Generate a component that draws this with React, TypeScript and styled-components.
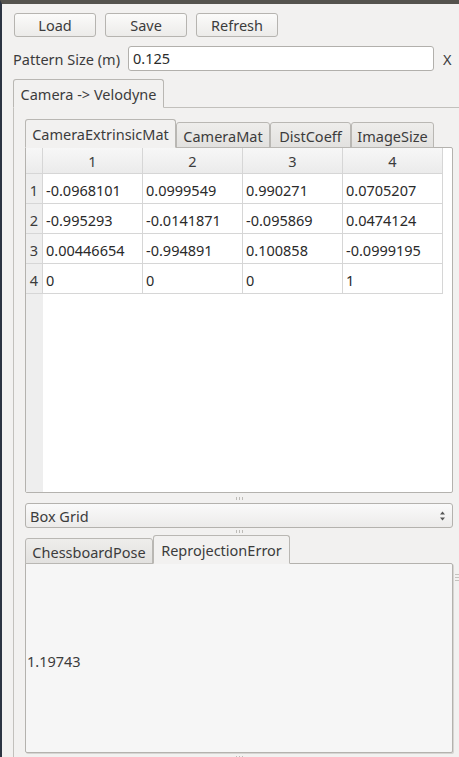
import styled, { createGlobalStyle } from "styled-components";

const Global = createGlobalStyle`
  html, body {
    margin: 0;
    padding: 0;
    background: #f2f1f0;
    overflow: hidden;
  }
  * { box-sizing: border-box; }
`;

const Window = styled.div`
  width: 459px;
  height: 757px;
  overflow: hidden;
  background: #f2f1f0;
  border-left: 2px solid #2c3442;
  border-top: 4px solid #55534e;
  font-family: "Noto Sans", "DejaVu Sans", sans-serif;
  font-size: 14.5px;
  color: #3c3c3c;
  display: flex;
  flex-direction: column;
  position: relative;
`;

const Toolbar = styled.div`
  display: flex;
  gap: 9px;
  padding: 9px 0 0 12px;
`;

const Button = styled.button`
  width: 82px;
  height: 24px;
  border: 1px solid #b6b4b0;
  border-radius: 3px;
  background: linear-gradient(#fbfbfa, #ecebe9);
  font: inherit;
  color: #3c3c3c;
  padding: 0;
  line-height: 20px;
`;

const PatternRow = styled.div`
  display: flex;
  align-items: center;
  padding: 9px 0 8px 11px;
`;

const Label = styled.span`
  width: 115px;
  white-space: nowrap;
`;

const TextInput = styled.div`
  width: 306px;
  height: 25px;
  border: 1px solid #b2b0ac;
  border-radius: 3px;
  background: #fff;
  padding: 0 0 0 4px;
  line-height: 23px;
  color: #2a2a2a;
`;

const Clear = styled.span`
  margin-left: 9px;
`;

const TabBar = styled.div<{ $indent: number }>`
  display: flex;
  align-items: flex-end;
  padding-left: ${(p) => p.$indent}px;
  position: relative;
  z-index: 1;
`;

const Tab = styled.div<{ $active?: boolean; $w: number }>`
  width: ${(p) => p.$w}px;
  height: ${(p) => (p.$active ? 29 : 26)}px;
  margin-bottom: -1px;
  border: 1px solid #b9b7b3;
  border-bottom-color: ${(p) => (p.$active ? "transparent" : "#b9b7b3")};
  border-radius: 3px 3px 0 0;
  background: ${(p) =>
    p.$active ? "#f2f1f0" : "linear-gradient(#eeedeb, #e2e1df)"};
  display: flex;
  align-items: center;
  justify-content: center;
  padding-top: ${(p) => (p.$active ? 0 : 2)}px;
  white-space: nowrap;
  color: #3c3c3c;
`;

const OuterPane = styled.div`
  margin-left: 11px;
  width: 470px;
  flex: 1;
  border: 1px solid #c2c0bc;
  border-radius: 0 3px 0 0;
  padding: 11px 0 0 11px;
  display: flex;
  flex-direction: column;
`;

const Column = styled.div`
  width: 428px;
  display: flex;
  flex-direction: column;
`;

const TableFrame = styled.div`
  height: 346px;
  border: 1px solid #b4b2ae;
  border-radius: 0 2px 2px 2px;
  background: #fff;
  display: flex;
  position: relative;
  z-index: 0;
`;

const RowHeaderStrip = styled.div`
  width: 17px;
  background: #eeeeee;
  display: flex;
  flex-direction: column;
`;

const Grid = styled.div`
  display: grid;
  grid-template-columns: repeat(4, 100px);
  grid-template-rows: 26px repeat(4, 30px);
  align-self: flex-start;
`;

const HeaderCorner = styled.div`
  height: 26px;
  background: linear-gradient(#f7f7f7, #ebebeb);
  border-right: 1px solid #d6d6d6;
  border-bottom: 1px solid #d6d6d6;
`;

const RowHead = styled.div`
  height: 30px;
  border-bottom: 1px solid #d6d6d6;
  border-right: 1px solid #d6d6d6;
  display: flex;
  align-items: center;
  justify-content: center;
  padding-top: 2px;
  color: #3c3c3c;
`;

const ColHead = styled.div`
  background: linear-gradient(#f7f7f7, #ebebeb);
  border-right: 1px solid #d6d6d6;
  border-bottom: 1px solid #d6d6d6;
  display: flex;
  align-items: center;
  justify-content: center;
  color: #3c3c3c;
`;

const Cell = styled.div`
  border-right: 1px solid #d6d6d6;
  border-bottom: 1px solid #d6d6d6;
  display: flex;
  align-items: center;
  padding: 2px 0 0 3px;
  color: #2a2a2a;
  white-space: nowrap;
`;

const Splitter = styled.div<{ $h: number }>`
  height: ${(p) => p.$h}px;
  display: flex;
  align-items: center;
  justify-content: center;
  gap: 2px;
`;

const Tick = styled.span`
  width: 1px;
  height: 3px;
  background: #bdbbb7;
`;

const Combo = styled.div`
  height: 25px;
  border: 1px solid #b4b2ae;
  border-radius: 3px;
  background: linear-gradient(#fafafa, #ecebea);
  display: flex;
  align-items: center;
  justify-content: space-between;
  padding: 0 6px 0 4px;
  color: #3c3c3c;
`;

const LowerPane = styled.div`
  height: 190px;
  border: 1px solid #b4b2ae;
  border-radius: 0 2px 2px 2px;
  background: #f6f6f6;
  box-shadow: 1px 1px 0 #d6d5d2;
  display: flex;
  align-items: center;
  padding: 6px 0 0 1px;
`;

const SideGrip = styled.div`
  position: absolute;
  right: 0;
  top: 570px;
  width: 4px;
  display: flex;
  flex-direction: column;
  gap: 2px;
`;

const GripLine = styled.span`
  height: 1px;
  background: #c4c2be;
`;

const matrix = [
  ["-0.0968101", "0.0999549", "0.990271", "0.0705207"],
  ["-0.995293", "-0.0141871", "-0.095869", "0.0474124"],
  ["0.00446654", "-0.994891", "0.100858", "-0.0999195"],
  ["0", "0", "0", "1"],
];

function SplitHandle({ h }: { h: number }) {
  return (
    <Splitter $h={h}>
      <Tick />
      <Tick />
      <Tick />
    </Splitter>
  );
}

function Arrows() {
  return (
    <svg width="7" height="12" viewBox="0 0 7 12">
      <path d="M3.5 1.5 L6 4.5 H1 Z" fill="#555" />
      <path d="M3.5 10.5 L6 7.5 H1 Z" fill="#555" />
    </svg>
  );
}

export default function App() {
  return (
    <>
      <Global />
      <Window>
        <Toolbar>
          <Button>Load</Button>
          <Button>Save</Button>
          <Button>Refresh</Button>
        </Toolbar>
        <PatternRow>
          <Label>Pattern Size (m)</Label>
          <TextInput>0.125</TextInput>
          <Clear>X</Clear>
        </PatternRow>

        <TabBar $indent={11}>
          <Tab $active $w={151}>
            Camera -&gt; Velodyne
          </Tab>
        </TabBar>
        <OuterPane>
          <Column>
            <TabBar $indent={0}>
              <Tab $active $w={151}>
                CameraExtrinsicMat
              </Tab>
              <Tab $w={94}>CameraMat</Tab>
              <Tab $w={81}>DistCoeff</Tab>
              <Tab $w={83}>ImageSize</Tab>
            </TabBar>
            <TableFrame>
              <RowHeaderStrip>
                <HeaderCorner />
                {matrix.map((_, i) => (
                  <RowHead key={i}>{i + 1}</RowHead>
                ))}
              </RowHeaderStrip>
              <Grid>
                {[1, 2, 3, 4].map((c) => (
                  <ColHead key={c}>{c}</ColHead>
                ))}
                {matrix.map((row, i) =>
                  row.map((v, j) => <Cell key={`${i}-${j}`}>{v}</Cell>)
                )}
              </Grid>
            </TableFrame>
            <SplitHandle h={10} />
            <Combo>
              <span>Box Grid</span>
              <Arrows />
            </Combo>
            <SplitHandle h={7} />
            <TabBar $indent={0}>
              <Tab $w={128}>ChessboardPose</Tab>
              <Tab $active $w={137}>
                ReprojectionError
              </Tab>
            </TabBar>
            <LowerPane>1.19743</LowerPane>
            <SplitHandle h={8} />
          </Column>
        </OuterPane>
        <SideGrip>
          <GripLine />
          <GripLine />
          <GripLine />
        </SideGrip>
      </Window>
    </>
  );
}
